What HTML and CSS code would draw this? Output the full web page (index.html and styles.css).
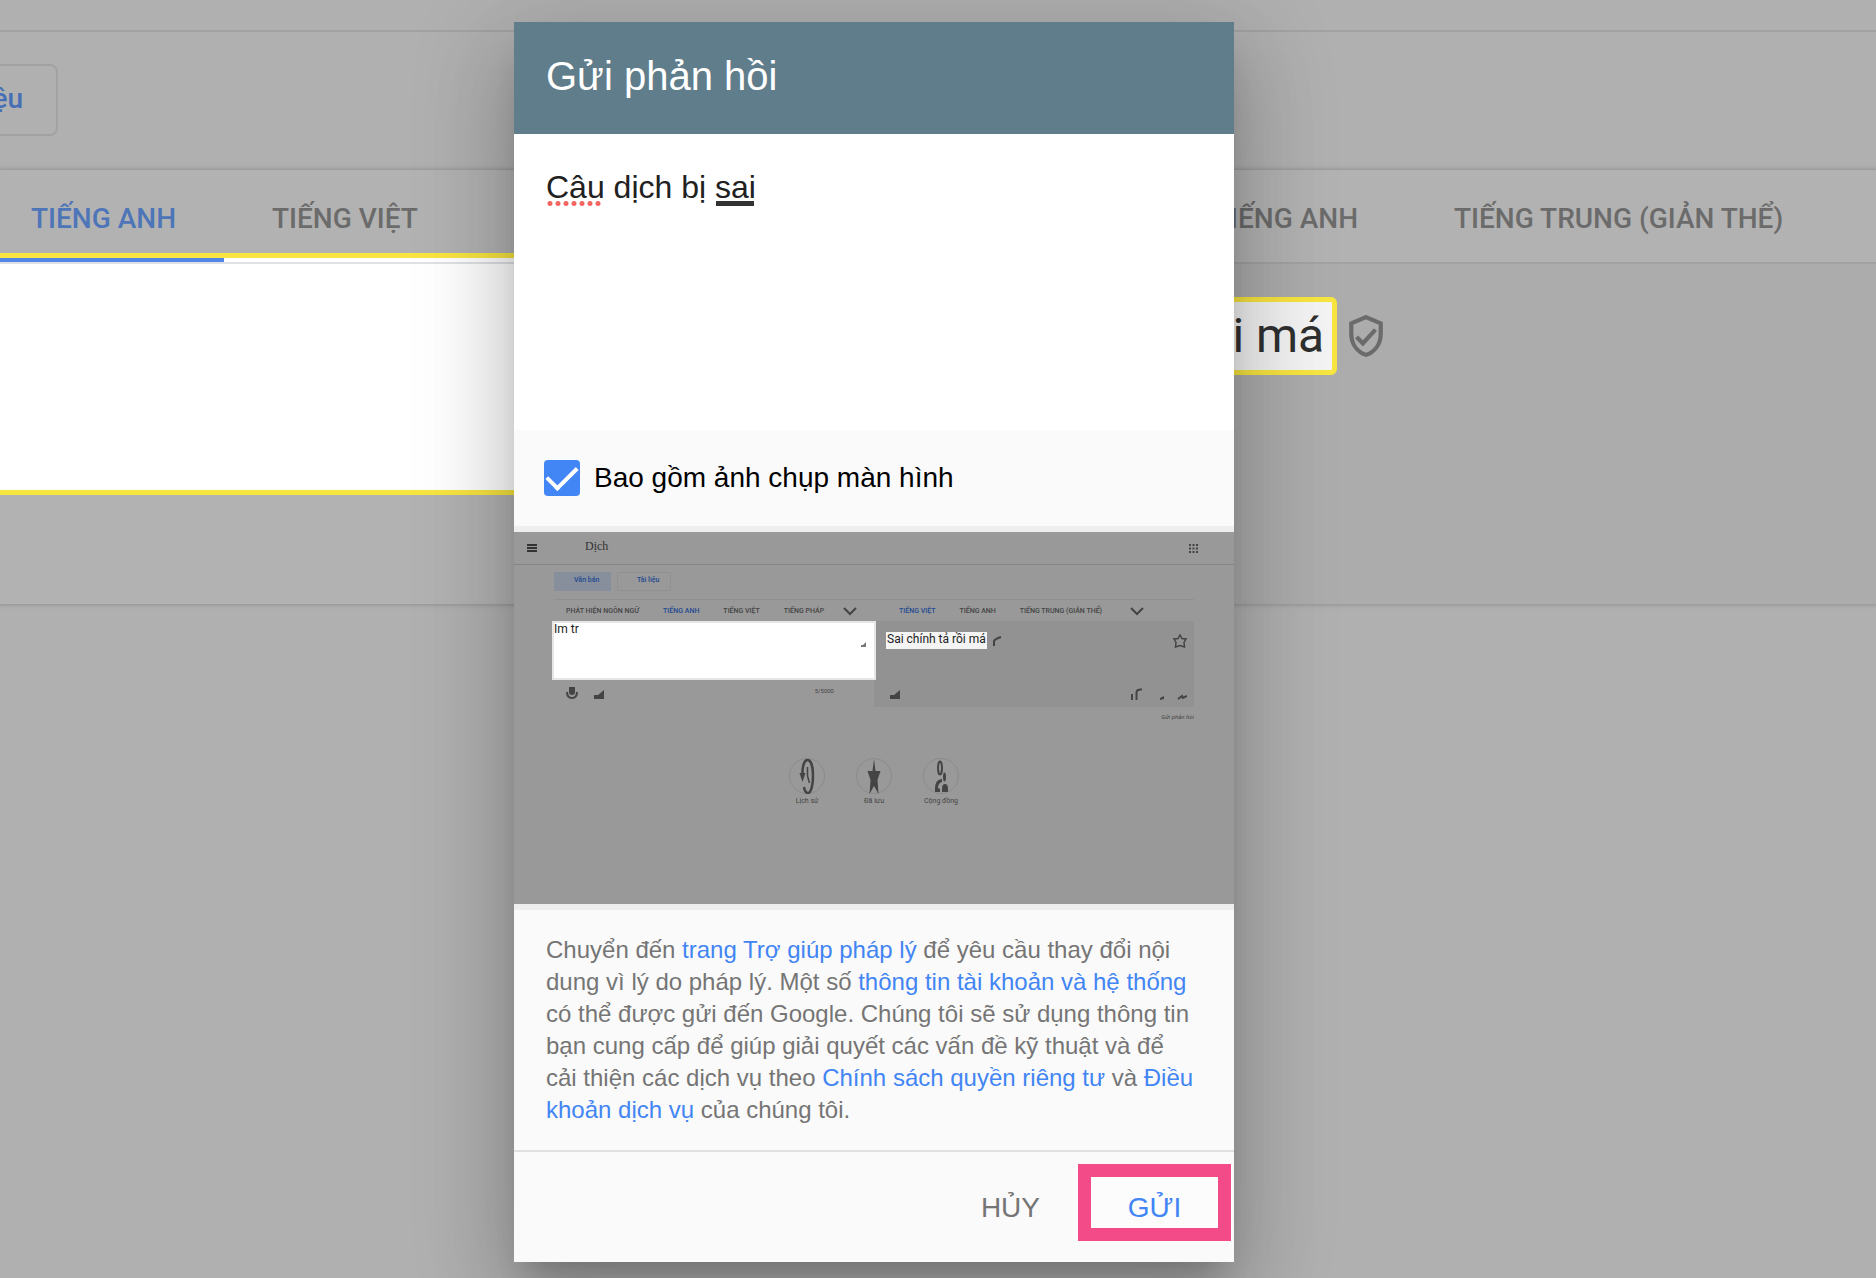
FILE: index.html
```html
<!DOCTYPE html>
<html lang="vi">
<head>
  <meta charset="UTF-8">
  <title>Gửi phản hồi</title>
  <link rel="stylesheet" href="styles.css">
</head>
<body>
  <div class="page">
    <header class="page-header"></header>
    <div class="modes">
      <button class="mode-button" type="button">Tài liệu</button>
    </div>
    <main class="translator">
      <section class="source">
        <nav class="tabs">
          <button class="tab tab-active" type="button">TIẾNG ANH</button>
          <button class="tab" type="button">TIẾNG VIỆT</button>
        </nav>
        <div class="source-highlight">
          <div class="tab-line"></div>
        </div>
      </section>
      <section class="target">
        <nav class="tabs">
          <button class="tab" type="button">TIẾNG ANH</button>
          <button class="tab" type="button">TIẾNG TRUNG (GIẢN THỂ)</button>
        </nav>
        <div class="result">
          <span class="result-text">Sai chính tả rồi má</span>
          <svg class="shield" viewBox="0 0 32 40">
            <path d="M16 2 L30 8 V18 C30 28 24 35 16 38 C8 35 2 28 2 18 V8 Z"/>
            <path d="M7 21 L13 27 L25 14"/>
          </svg>
        </div>
      </section>
    </main>
  </div>

  <div class="overlay">
    <form class="dialog" onsubmit="return false">
      <h1 class="dialog-title">Gửi phản hồi</h1>
      <div class="comment">
        <textarea class="comment-text" aria-label="Phản hồi" spellcheck="false">Câu dịch bị sai</textarea>
        <span class="mark mark-error"></span>
        <span class="mark mark-word"></span>
      </div>
      <label class="include" for="screenshot">
        <input type="checkbox" id="screenshot" checked>
        <span>Bao gồm ảnh chụp màn hình</span>
      </label>

      <!-- Ảnh chụp màn hình thu nhỏ -->
      <div class="shot">
        <div class="shot-bar">
          <svg width="10" height="8" viewBox="0 0 10 8"><path d="M0 1h10M0 4h10M0 7h10" stroke="#333" stroke-width="2"/></svg>
          <span class="shot-brand">Dịch</span>
          <svg width="9" height="9" viewBox="0 0 9 9"><path d="M0 1h9M0 4.5h9M0 8h9" stroke="#444" stroke-width="2" stroke-dasharray="2 1.5"/></svg>
        </div>
        <div class="shot-modes">
          <span class="shot-mode shot-mode-on">Văn bản</span>
          <span class="shot-mode">Tài liệu</span>
        </div>
        <div class="shot-columns">
          <div class="shot-source">
            <div class="shot-tabs">
              <span>PHÁT HIỆN NGÔN NGỮ</span>
              <span class="shot-on">TIẾNG ANH</span>
              <span>TIẾNG VIỆT</span>
              <span>TIẾNG PHÁP</span>
              <svg width="14" height="9" viewBox="0 0 14 9"><path d="M1 1l6 6 6-6" fill="none" stroke="#444" stroke-width="2"/></svg>
            </div>
            <div class="shot-input">
              <span>Im tr</span>
              <svg width="5" height="5" viewBox="0 0 5 5"><path d="M0 5V3L2 3 5 0V5z" fill="#777"/></svg>
            </div>
            <div class="shot-tools">
              <svg width="12" height="13" viewBox="0 0 12 13"><path d="M3 0h6v5q0 3-3 3t-3-3z" fill="#444"/><path d="M1 5q0 6 5 6t5-6" fill="none" stroke="#444" stroke-width="2"/></svg>
              <svg width="10" height="9" viewBox="0 0 10 9"><path d="M0 9V5h4L10 0V9z" fill="#444"/></svg>
              <span class="shot-count">5/5000</span>
            </div>
          </div>
          <div class="shot-target">
            <div class="shot-tabs">
              <span class="shot-on">TIẾNG VIỆT</span>
              <span>TIẾNG ANH</span>
              <span>TIẾNG TRUNG (GIẢN THỂ)</span>
              <svg width="14" height="9" viewBox="0 0 14 9"><path d="M1 1l6 6 6-6" fill="none" stroke="#444" stroke-width="2"/></svg>
            </div>
            <div class="shot-output">
              <div class="shot-result">
                <span>Sai chính tả rồi má</span>
                <svg width="9" height="10" viewBox="0 0 9 10"><path d="M1 10V5Q2 3 8 1" fill="none" stroke="#444" stroke-width="2"/></svg>
                <svg class="shot-star" width="14" height="14" viewBox="0 0 14 14"><path d="M7 1l2 3.500 4 .5-2 3.500.5 4.500-4.500-1.500-4.500 1.500.5-4.500-2-3.500 4-.5z" fill="none" stroke="#444" stroke-width="1.500"/></svg>
              </div>
              <div class="shot-actions">
                <svg width="10" height="9" viewBox="0 0 10 9"><path d="M0 9V5h4L10 0V9z" fill="#444"/></svg>
                <svg class="shot-copy" width="56" height="12" viewBox="0 0 56 12"><path d="M1 12V6M5.500 12V4Q6 1 11 1.500" fill="none" stroke="#444" stroke-width="2"/><path d="M29 12v-2l4-2v3z" fill="#444"/><path d="M47 11l4-3 1 2 4-2" fill="none" stroke="#444" stroke-width="2"/></svg>
              </div>
            </div>
          </div>
        </div>
        <div class="shot-feedback">Gửi phản hồi</div>
        <div class="shot-links">
          <div class="shot-link">
            <svg width="36" height="36" viewBox="0 0 36 36"><circle cx="18" cy="18" r="17.500" fill="none" stroke="#8b8b8b"/><path d="M13.500 19C13 9 15 2 18.500 2S24 9 24 18 22 35 19 35Q16 35 15 29" fill="none" stroke="#444" stroke-width="2.500"/><path d="M10.500 15h6l-3 9z" fill="#444"/><path d="M18.500 9v9l2 7" fill="none" stroke="#444" stroke-width="1.500"/></svg>
            <span>Lịch sử</span>
          </div>
          <div class="shot-link">
            <svg width="36" height="36" viewBox="0 0 36 36"><circle cx="18" cy="18" r="17.500" fill="none" stroke="#8b8b8b"/><path d="M18 1l1.500 12h5l-3 9 1 14-4.500-8-4.500 8 1-14-3-9h5z" fill="#444"/></svg>
            <span>Đã lưu</span>
          </div>
          <div class="shot-link">
            <svg width="36" height="36" viewBox="0 0 36 36"><circle cx="18" cy="18" r="17.500" fill="none" stroke="#8b8b8b"/><ellipse cx="17" cy="10" rx="2" ry="6.500" fill="none" stroke="#444" stroke-width="2"/><ellipse cx="21.500" cy="19" rx="1.500" ry="4.500" fill="#444"/><path d="M12 34V31Q12 21 19 21V24Q15 25 15 30L17 31V34zM19 34V31Q19 26 22 26T25 31V34z" fill="#444"/></svg>
            <span>Cộng đồng</span>
          </div>
        </div>
      </div>

      <p class="legal">
        Chuyển đến <a href="#">trang Trợ giúp pháp lý</a> để yêu cầu thay đổi nội dung vì lý do pháp lý. Một số <a href="#">thông tin tài khoản và hệ thống</a> có thể được gửi đến Google. Chúng tôi sẽ sử dụng thông tin bạn cung cấp để giúp giải quyết các vấn đề kỹ thuật và để<br>
        cải thiện các dịch vụ theo <a href="#">Chính sách quyền riêng tư</a> và <a href="#">Điều khoản dịch vụ</a> của chúng tôi.
      </p>
      <div class="actions">
        <button class="cancel" type="button">HỦY</button>
        <button class="send" type="submit">GỬI</button>
      </div>
    </form>
  </div>
</body>
</html>
```
FILE: styles.css
```css
* {
  box-sizing: border-box;
}
body {
  margin: 0;
  min-height: 100vh;
  background-color: #b0b0b0;
  font-family: "Liberation Sans", Arial, sans-serif;
  overflow: hidden;
}
button {
  border: none;
  padding: 0;
  background: none;
  font-family: inherit;
  cursor: pointer;
}

/* Trang dịch phía sau */
.page {
  font-family: Roboto, sans-serif;
}
.page-header {
  height: 32px;
  border-bottom: 2px solid #a2a2a2;
}
.modes {
  display: flex;
  padding: 32px 0 34px;
}
.mode-button {
  height: 72px;
  margin-left: -120px;
  padding: 0 33px 4px;
  width: 178px;
  text-align: right;
  border: 2px solid #a2a2a2;
  border-radius: 8px;
  font-size: 28px;
  font-weight: 500;
  color: #466fb5;
}
.translator {
  display: grid;
  grid-template-columns: calc(50% - 64px) 1fr;
  height: 434px;
  background-color: #b2b2b2;
  box-shadow: 0 0 4px 1px #909090;
}
.tabs {
  display: flex;
  height: 94px;
  white-space: nowrap;
}
.source .tabs {
  height: 83px;
  margin-left: -17px;
}
.target .tabs {
  padding-left: 291px;
  border-bottom: 2px solid #a2a2a2;
}
.tab {
  height: 83px;
  padding: 14px 48px 0;
  font-size: 28px;
  line-height: 69px;
  font-weight: 500;
  color: #6b6b6b;
}
.tab-active {
  color: #4d75b8;
}
.source-highlight {
  height: 242px;
  background-color: #fff;
  border: 5px solid #f8e540;
  border-left: none;
}
.tab-line {
  height: 6px;
  border-bottom: 2px solid #dfe1e5;
  background: linear-gradient(#5287e8, #5287e8) no-repeat;
  background-size: 224px 4px;
}
.result {
  display: flex;
  align-items: flex-start;
  height: 340px;
  padding: 33px 0 0 42px;
  background-color: #acacac;
}
.result-text {
  height: 78px;
  padding: 0 8px;
  border: 5px solid #f8e540;
  border-radius: 6px;
  background-color: #f3f3f3;
  font-size: 48px;
  line-height: 68px;
  white-space: nowrap;
  color: #303030;
}
.shield {
  width: 34px;
  height: 42px;
  margin: 18px 0 0 12px;
  fill: none;
  stroke: #6b6b6b;
  stroke-width: 4;
}

/* Hộp thoại */
.overlay {
  position: absolute;
  top: 0;
  left: 0;
  width: 100%;
  display: flex;
  justify-content: center;
  padding: 22px 128px 16px 0;
}
.dialog {
  width: 720px;
  background-color: #fafafa;
  box-shadow: 0 22px 30px -14px rgba(0, 0, 0, 0.2),
    0 48px 76px 6px rgba(0, 0, 0, 0.14),
    0 18px 92px 16px rgba(0, 0, 0, 0.12);
}
.dialog-title {
  margin: 0;
  height: 112px;
  padding: 0 32px;
  background-color: #607d8b;
  color: #fff;
  font-size: 40px;
  font-weight: 300;
  line-height: 108px;
}
.comment {
  position: relative;
  height: 296px;
}
.comment-text {
  display: block;
  width: 100%;
  height: 100%;
  padding: 34px 32px;
  border: none;
  outline: none;
  resize: none;
  background-color: #fff;
  font-family: inherit;
  font-size: 32px;
  line-height: 38px;
  color: #212121;
}
.mark {
  position: absolute;
  top: 67px;
  height: 5px;
}
.mark-error {
  left: 32px;
  width: 56px;
  background: radial-gradient(circle, #f4655f 2px, transparent 3px) 0 0 / 8px 5px;
}
.mark-word {
  left: 202px;
  width: 38px;
  background-color: #333;
}
.include {
  display: flex;
  align-items: center;
  gap: 14px;
  height: 96px;
  padding: 0 30px;
  font-size: 28px;
  color: #000;
}
.include input {
  appearance: none;
  width: 36px;
  height: 36px;
  margin: 0;
  border-radius: 4px;
  background-color: #4285f4;
  display: grid;
  place-items: center;
}
.include input:checked::before {
  content: "";
  width: 26px;
  height: 13px;
  margin-top: -8px;
  border-left: 4px solid #fff;
  border-bottom: 4px solid #fff;
  transform: rotate(-45deg);
}

/* Ảnh thu nhỏ */
.shot {
  height: 384px;
  border-top: 6px solid #eee;
  border-bottom: 6px solid #eee;
  background-color: #999;
  font-family: Roboto, sans-serif;
  font-size: 7px;
  line-height: 8px;
  color: #444;
  white-space: nowrap;
}
.shot svg {
  flex: none;
}
.shot-bar {
  display: flex;
  align-items: center;
  height: 33px;
  padding: 0 36px 0 13px;
  border-bottom: 1px solid #868686;
}
.shot-brand {
  margin: 0 auto 4px 48px;
  font-family: "Liberation Serif", serif;
  font-size: 12px;
  line-height: 14px;
  color: #333;
}
.shot-modes {
  display: flex;
  gap: 6px;
  padding: 7px 40px 8px;
}
.shot-mode {
  width: 54px;
  height: 19px;
  padding-left: 19px;
  border: 1px solid #919191;
  font-weight: 500;
  line-height: 15px;
  color: #234a91;
}
.shot-mode-on {
  width: 57px;
  border-color: #878f9c;
  background-color: #878f9c;
}
.shot-columns {
  display: grid;
  grid-template-columns: 322px 320px;
  margin-left: 38px;
}
.shot-tabs {
  display: flex;
  align-items: center;
  gap: 24px;
  height: 22px;
  margin-left: 2px;
  padding-left: 12px;
  border-top: 1px solid #909090;
  font-weight: 500;
}
.shot-tabs svg {
  margin: 2px 0 0 -5px;
}
.shot-target .shot-tabs {
  margin: 0;
  padding-left: 25px;
}
.shot-target .shot-tabs svg {
  margin-left: 4px;
}
.shot-on {
  color: #234a91;
}
.shot-input {
  display: flex;
  justify-content: space-between;
  width: 324px;
  height: 59px;
  padding: 0 8px 0 0;
  border: 2px solid #e6e6e6;
  background-color: #fff;
  font-size: 12px;
  line-height: 12px;
  color: #222;
  position: relative;
}
.shot-input svg {
  margin-top: 19px;
}
.shot-tools {
  display: flex;
  gap: 16px;
  padding: 7px 40px 0 14px;
}
.shot-tools svg + svg {
  margin-top: 3px;
}
.shot-count {
  margin-left: auto;
  font-size: 6px;
}
.shot-output {
  height: 86px;
  padding: 11px 7px 7px 12px;
  background-color: #929292;
  display: flex;
  flex-direction: column;
  justify-content: space-between;
}
.shot-result, .shot-actions {
  display: flex;
  align-items: center;
  gap: 6px;
}
.shot-actions {
  padding-left: 4px;
}
.shot-result span {
  height: 17px;
  padding: 0 1px;
  background-color: #f4f4f4;
  font-size: 12px;
  line-height: 14px;
  color: #222;
}
.shot-star, .shot-copy {
  margin-left: auto;
}
.shot-feedback {
  padding: 6px 40px 0 0;
  text-align: right;
  font-size: 6px;
  font-style: italic;
}
.shot-links {
  display: flex;
  justify-content: center;
  gap: 21px;
  padding-top: 37px;
}
.shot-link {
  width: 46px;
  display: flex;
  flex-direction: column;
  align-items: center;
  gap: 3px;
}

.legal {
  margin: 0;
  padding: 24px 32px;
  font-size: 24px;
  line-height: 32px;
  color: #757575;
}
.legal a {
  color: #4285f4;
  text-decoration: none;
}
.actions {
  display: flex;
  justify-content: flex-end;
  align-items: flex-start;
  height: 112px;
  padding: 12px 3px 0 0;
  border-top: 2px solid #e0e0e0;
}
.actions button {
  height: 77px;
  font-size: 28px;
}
.cancel {
  padding: 10px 38px 0;
  color: #757575;
}
.actions .send {
  width: 153px;
  border: 13px solid #f24b87;
  padding-top: 10px;
  background-color: #fcfcfc;
  color: #4285f4;
}
```
